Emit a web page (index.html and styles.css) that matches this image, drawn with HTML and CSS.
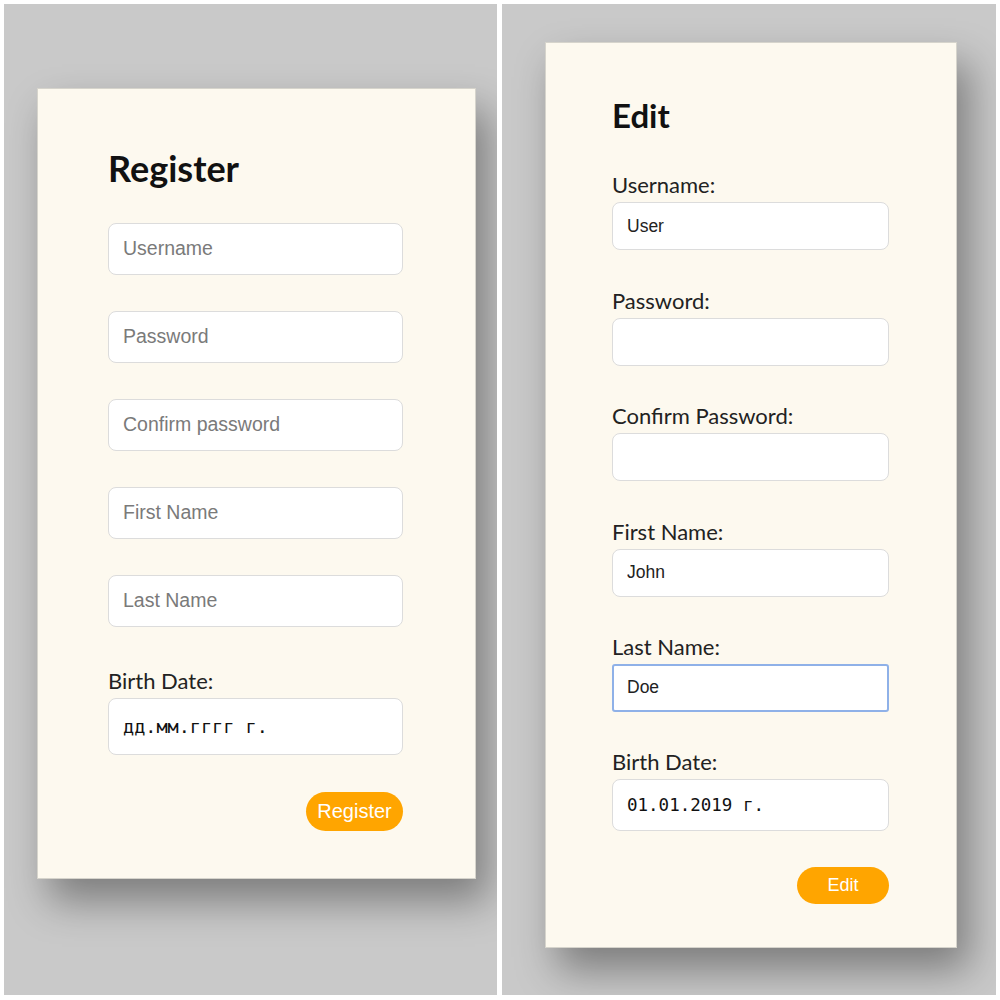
FILE: index.html
```html
<!DOCTYPE html>
<html lang="ru">
<head>
<meta charset="utf-8">
<title>Register / Edit</title>
<link rel="stylesheet" href="styles.css">
</head>
<body>
<div class="page">
  <div class="panel panel-left">
    <form class="card card-register">
      <h1 class="title">Register</h1>
      <input class="field" type="text" placeholder="Username">
      <input class="field" type="password" placeholder="Password">
      <input class="field" type="password" placeholder="Confirm password">
      <input class="field" type="text" placeholder="First Name">
      <input class="field" type="text" placeholder="Last Name">
      <label class="label label-birth">Birth Date:</label>
      <div class="field date">дд.мм.гггг г.</div>
      <div class="actions"><button class="btn" type="button">Register</button></div>
    </form>
  </div>
  <div class="panel panel-right">
    <form class="card card-edit">
      <h1 class="title">Edit</h1>
      <label class="label">Username:</label>
      <input class="field" type="text" value="User">
      <label class="label">Password:</label>
      <input class="field" type="password">
      <label class="label">Confirm Password:</label>
      <input class="field" type="password">
      <label class="label">First Name:</label>
      <input class="field" type="text" value="John">
      <label class="label">Last Name:</label>
      <input class="field focused" type="text" value="Doe">
      <label class="label">Birth Date:</label>
      <div class="field date">01.01.2019 г.</div>
      <div class="actions"><button class="btn" type="button">Edit</button></div>
    </form>
  </div>
</div>
</body>
</html>
```

FILE: styles.css
```css
* { box-sizing: border-box; }
html, body { margin: 0; padding: 0; background: #ffffff; }
body { font-family: Lato, "Noto Sans", sans-serif; }

.page {
  display: flex;
  gap: 5px;
  padding: 4px 4px 5px 4px;
  height: 1000px;
}

.panel {
  background: #c9c9c9;
  height: 991px;
  display: flex;
  align-items: flex-start;
  overflow: hidden;
}
.panel-left { width: 493px; padding: 84px 0 0 33px; }
.panel-right { width: 494px; padding: 38px 0 0 43px; }

.card {
  background: #fdf9ef;
  display: flex;
  flex-direction: column;
  align-items: stretch;
  box-shadow: 12px 22px 38px rgba(0, 0, 0, 0.38);
  border: 1px solid #d6d4cc;
}

.card-register {
  width: 439px;
  height: 791px;
  padding: 57.5px 72px 0 70px;
}
.card-edit {
  width: 412px;
  height: 906px;
  padding: 53px 67px 0 66px;
}

.title {
  margin: 0;
  font-family: Lato, sans-serif;
  font-weight: 700;
  color: #111;
  line-height: 1.2;
}
.card-register .title { font-size: 36px; margin-bottom: 33.3px; }
.card-edit .title { font-size: 33px; margin-bottom: 35.8px; }

.label {
  display: block;
  font-family: Lato, sans-serif;
  font-size: 22px;
  line-height: 27px;
  color: #222;
  margin-bottom: 4px;
}

.field {
  display: block;
  width: 100%;
  background: #fff;
  border: 1px solid #dcdcdc;
  border-radius: 8px;
  font-family: "Liberation Sans", Arial, sans-serif;
  color: #222;
  outline: none;
  margin: 0;
}
.field::placeholder { color: #7a7a7a; }

.card-register .field {
  height: 52px;
  padding: 0 14px;
  font-size: 19.5px;
  margin-bottom: 36px;
}
.card-register .field:nth-of-type(5) { margin-bottom: 40px; }

.card-edit .field {
  height: 48px;
  padding: 0 14px;
  font-size: 17.5px;
  margin-bottom: 36.4px;
}

.field.focused {
  border: 2px solid #8fb1e8;
  border-radius: 3px;
  padding: 0 13px;
}

.date {
  display: flex;
  align-items: center;
  font-family: "DejaVu Sans Mono", "Liberation Mono", monospace;
  color: #111;
}
.card-register .date { height: 57px; font-size: 18.5px; margin-bottom: 37px; }
.card-edit .date { height: 52px; font-size: 17.5px; margin-bottom: 35.5px; }

.actions {
  display: flex;
  justify-content: flex-end;
}

.btn {
  background: #ffa500;
  color: #fff;
  border: none;
  font-family: "Liberation Sans", Arial, sans-serif;
  padding: 0;
  cursor: pointer;
}
.card-register .btn { width: 97px; height: 39px; border-radius: 20px; font-size: 20px; }
.card-edit .btn { width: 92px; height: 37px; border-radius: 19px; font-size: 18px; }
```
